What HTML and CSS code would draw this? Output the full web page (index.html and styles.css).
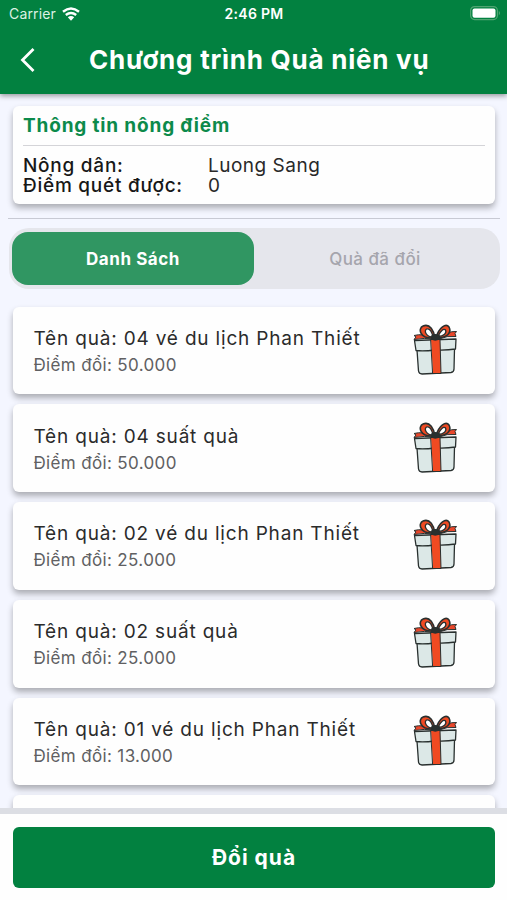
FILE: index.html
```html
<!DOCTYPE html>
<html lang="vi">
<head>
<meta charset="utf-8">
<title>Chương trình Quà niên vụ</title>
<link rel="stylesheet" href="styles.css">
</head>
<body>
<svg class="defs" aria-hidden="true">
  <symbol id="gift" viewBox="0 0 44 52">
    <g stroke="#29302f" stroke-width="1.3" stroke-linejoin="round" stroke-linecap="round">
      <path fill="#dce8e7" d="M4 26 41.5 25 41 45Q41 48 38 48.5L9 50Q6 50 5.5 47Z"/>
      <path fill="#dce8e7" d="M1.5 16.5 43 15 42.5 25Q34 26.5 22 26 10 27.5 3 26.5Z"/>
      <path fill="#f04a22" stroke-width="1" d="M18 15.5H27L28 49.5H20Z"/>
      <path fill="#e9472b" stroke-width="1" d="M20 14Q10 9 1 11.5L3 13 1 15.5Q12 13.5 20 15Z"/>
      <path fill="#e9472b" stroke-width="1" d="M25 14Q34 7 43.5 7.5L42 9.5 43 12.5Q34 11.5 26 15Z"/>
      <path fill="#f04a22" stroke-width="1.6" d="M21 14C6 15 5 4 10 2 17-1 21 7 22 14Z"/>
      <path fill="#f04a22" stroke-width="1.6" d="M23 14C26 3 33-1 36 3 39 9 34 14 23 14Z"/>
      <path fill="#fff" d="M20 13C13 13 11 7 13.5 5 17 4 19 8 20 13Z"/>
      <path fill="#fff" d="M25 12.5C27 7 31 4 32.5 6 34 9 31 12 25 12.5Z"/>
      <path fill="#29302f" d="M19 11.5Q22 10 26 11.5L26.5 15Q22 17 18.5 15Z"/>
    </g>
  </symbol>
</svg>
<div class="app">
  <header class="header">
    <div class="status">
      <div class="carrier"><span>Carrier</span>
        <svg class="wifi" viewBox="0 0 18 14" fill="none" stroke="#fff" stroke-width="2.4"><path d="M1 4.8Q9-1.8 17 4.8M3.8 8Q9 3.8 14.2 8"/><path fill="#fff" stroke="none" d="M5.8 10.2Q9 7.8 12.2 10.2L9 13.7Z"/></svg>
      </div>
      <div class="time">2:46 PM</div>
      <svg class="battery" viewBox="0 0 31 15"><rect x=".6" y=".6" width="26.8" height="13" rx="4" fill="none" stroke="#4fa471" stroke-width="1.2"/><rect x="2.5" y="2.5" width="23" height="9.2" rx="2" fill="#fff"/><path d="M28.8 4.7Q31.2 7 28.8 9.4Z" fill="#4fa471"/></svg>
    </div>
    <div class="titlebar">
      <svg class="back" viewBox="0 0 16 24" fill="none" stroke="#fff" stroke-width="2.8"><path d="M13.5 1 2.5 12l11 11"/></svg>
      <h1>Chương trình Quà niên vụ</h1>
    </div>
  </header>
  <main class="main">
    <section class="info">
      <h2>Thông tin nông điểm</h2>
      <dl>
        <dt>Nông dân:</dt><dd>Luong Sang</dd>
        <dt>Điểm quét được:</dt><dd>0</dd>
      </dl>
    </section>
    <div class="rule"></div>
    <nav class="tabs"><div class="tab active">Danh Sách</div><div class="tab">Quà đã đổi</div></nav>
    <div class="list">
      <article class="item"><div><h3>Tên quà: 04 vé du lịch Phan Thiết</h3><p>Điểm đổi: 50.000</p></div><svg class="gift"><use href="#gift"/></svg></article>
      <article class="item"><div><h3>Tên quà: 04 suất quà</h3><p>Điểm đổi: 50.000</p></div><svg class="gift"><use href="#gift"/></svg></article>
      <article class="item"><div><h3>Tên quà: 02 vé du lịch Phan Thiết</h3><p>Điểm đổi: 25.000</p></div><svg class="gift"><use href="#gift"/></svg></article>
      <article class="item"><div><h3>Tên quà: 02 suất quà</h3><p>Điểm đổi: 25.000</p></div><svg class="gift"><use href="#gift"/></svg></article>
      <article class="item"><div><h3>Tên quà: 01 vé du lịch Phan Thiết</h3><p>Điểm đổi: 13.000</p></div><svg class="gift"><use href="#gift"/></svg></article>
      <article class="item"></article>
    </div>
  </main>
  <footer class="footer"><button>Đổi quà</button></footer>
</div>
</body>
</html>
```
FILE: styles.css
```css
* { box-sizing: border-box; margin: 0; padding: 0; }
body { font-family: Inter, "Liberation Sans", sans-serif; background: #f4f6ff; }
.defs { position: absolute; width: 0; height: 0; }
.app { height: 900px; display: flex; flex-direction: column; overflow: hidden; }
.header { height: 94px; flex: none; background: #028140; color: #fff; box-shadow: 0 2px 5px rgba(0,0,0,.38); z-index: 1; }
.status { height: 27px; padding: 0 6px 0 9px; display: grid; grid-template-columns: 1fr auto 1fr; align-items: center; }
.carrier { display: flex; align-items: center; gap: 6px; font-size: 14px; letter-spacing: .15px; color: #dcf2e4; }
.wifi { width: 18px; height: 14px; }
.time { font-size: 14px; font-weight: 600; letter-spacing: .3px; margin-right: 2px; }
.battery { width: 31px; height: 15px; justify-self: end; }
.titlebar { height: 66px; display: flex; align-items: center; padding-left: 20px; }
.back { width: 16px; height: 24px; }
h1 { margin-left: 53px; font-size: 26px; line-height: 34px; font-weight: 700; letter-spacing: .76px; white-space: nowrap; }
.main { flex: 1; min-height: 0; overflow: hidden; padding: 12px 12px 0 13px; display: flex; flex-direction: column; }
.info, .item { background: #fefefe; border-radius: 6px; box-shadow: 0 4px 6px rgba(0,0,0,.3); }
.info { height: 98px; flex: none; padding: 7px 10px 0; }
h2 { height: 33px; border-bottom: 1.5px solid #d4d4d8; color: #0c8a4b; font-size: 19px; line-height: 26px; font-weight: 700; letter-spacing: .84px; }
dl { display: grid; grid-template-columns: 185px 1fr; grid-auto-rows: 19.5px; padding-top: 10px; font-size: 19px; line-height: 19px; letter-spacing: .5px; white-space: nowrap; }
dt { font-weight: 500; color: #171717; letter-spacing: .75px; }
dd { color: #292929; }
.rule { flex: none; height: 1px; margin: 14px -5px 0; background: #c8cad4; }
.tabs { flex: none; height: 61px; margin: 9px -5px 0 -4px; background: #e5e6ec; border-radius: 20px; padding: 4px 3px; display: flex; }
.tab { width: 242px; height: 53px; border-radius: 16px; display: flex; align-items: center; justify-content: center; color: #a5a5ad; font-size: 17px; font-weight: 500; letter-spacing: .45px; }
.tab.active { background: #309662; color: #fff; font-weight: 700; letter-spacing: .55px; }
.list { margin-top: 17.5px; display: flex; flex-direction: column; gap: 10px; }
.item { height: 87.75px; flex: none; padding: 19.4px 38px 0 20.5px; display: flex; justify-content: space-between; }
h3 { font-size: 19px; line-height: 26px; font-weight: 400; letter-spacing: .82px; color: #2b2b2b; white-space: nowrap; }
.item p { font-size: 17px; line-height: 26px; letter-spacing: .35px; color: #606062; }
.gift { width: 44px; height: 52px; margin-top: -2px; }
.footer { height: 92px; flex: none; border-top: 6px solid #dcdee4; background: #fefefe; padding: 13px 12px 0 13px; }
button { display: block; width: 100%; height: 61px; border: 0; border-radius: 6px; background: #028140; color: #fff; font: 700 21px/61px Inter, "Liberation Sans", sans-serif; letter-spacing: 1px; }
```
